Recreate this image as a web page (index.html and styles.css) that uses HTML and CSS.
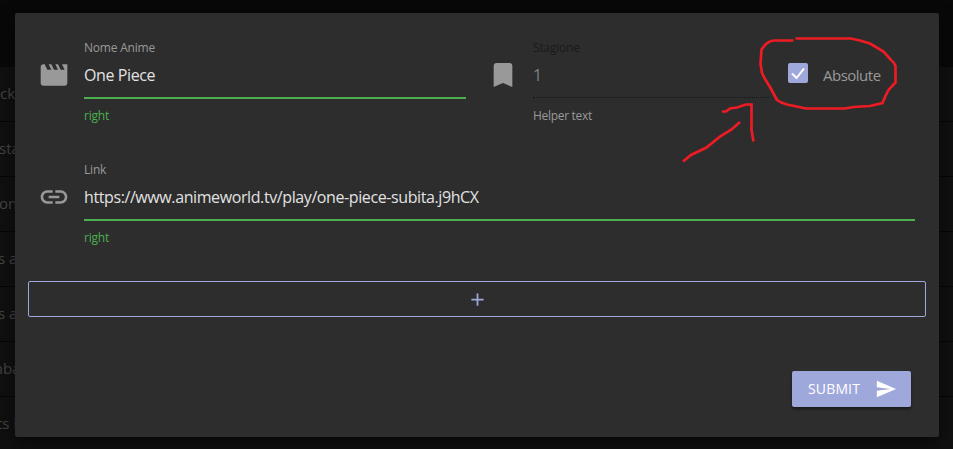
FILE: index.html
```html
<!DOCTYPE html>
<html lang="it">
<head>
<meta charset="utf-8">
<title>Aggiungi anime</title>
<link rel="stylesheet" href="styles.css">
</head>
<body>
<div class="page">
  <div class="page-header"></div>
  <div class="row"><span class="t1">ck</span></div>
  <div class="row"><span class="t2">sta</span></div>
  <div class="row"><span class="t3">on</span></div>
  <div class="row"><span class="t4">s a</span></div>
  <div class="row"><span class="t4">s a</span></div>
  <div class="row"><span class="t5">mba</span></div>
  <div class="row"><span class="t6">ts l</span></div>
</div>
<form class="modal">
  <div class="fields">
    <div class="field">
      <svg class="icon" viewBox="0 0 24 24"><path d="M18 4l2 4h-3l-2-4h-2l2 4h-3l-2-4H8l2 4H7L5 4H4c-1.1 0-1.99.9-1.99 2L2 18c0 1.1.9 2 2 2h16c1.1 0 2-.9 2-2V4h-4z"/></svg>
      <div class="control">
        <div class="label">Nome Anime</div>
        <div class="value"><span class="name-value">One Piece</span></div>
        <div class="helper">right</div>
      </div>
    </div>
    <div class="field disabled">
      <svg class="icon" viewBox="0 0 24 24"><path d="M17 3H7c-1.1 0-1.99.9-1.99 2L5 21l7-3 7 3V5c0-1.100-.9-2-2-2z"/></svg>
      <div class="control">
        <div class="label">Stagione</div>
        <div class="value">1</div>
        <div class="helper">Helper text</div>
      </div>
    </div>
    <div class="check">
      <span class="box"><svg viewBox="0 0 20 20"><path d="M4 10.500L8.500 15L16 5.500"/></svg></span>
      <span class="check-label">Absolute</span>
    </div>
  </div>
  <div class="field link-field">
    <svg class="icon" viewBox="0 0 24 24"><path d="M3.900 12c0-1.710 1.390-3.100 3.100-3.100h4V7H7c-2.760 0-5 2.240-5 5s2.240 5 5 5h4v-1.900H7c-1.710 0-3.100-1.390-3.100-3.100zM8 13h8v-2H8v2zm9-6h-4v1.900h4c1.710 0 3.100 1.390 3.100 3.100s-1.390 3.100-3.100 3.100h-4V17h4c2.760 0 5-2.240 5-5s-2.240-5-5-5z"/></svg>
    <div class="control">
      <div class="label">Link</div>
      <div class="value"><span class="url">https://www.animeworld.tv/play/one-piece-subita.j9hCX</span></div>
      <div class="helper">right</div>
    </div>
  </div>
  <button type="button" class="add" aria-label="+"><svg viewBox="0 0 24 24"><path d="M19 13h-6v6h-2v-6H5v-2h6V5h2v6h6v2z"/></svg></button>
  <div class="actions">
    <button type="button" class="submit"><span>SUBMIT</span><svg viewBox="0 0 24 24"><path d="M2.010 21L23 12 2.010 3 2 10l15 2-15 2z"/></svg></button>
  </div>
</form>
<svg class="annotation" viewBox="0 0 953 449">
  <path d="M793.500 40.500H774Q769 41 766 44L761.500 49.500L760.500 64L762 73L765 79L770 87L777 100Q781 103 787 104.500L806 108.500H845L853 107L870 106L882.500 103L885 97L888.500 90L895.500 82.500V66Q894 62 891 60L883.500 51.500L870 43.500L860 40.500L851 38.500H795.500"/>
  <path d="M683 161.500L691 155L706.500 147.500L720 136.500L731.500 129.500L740 122M722 111.500H726L730 108.500L737 107.500L746 104.500H751.500V130L753.500 141.500"/>
</svg>
</body>
</html>
```
FILE: styles.css
```css
* { box-sizing: border-box; }
body {
  margin: 0;
  height: 449px;
  overflow: hidden;
  background: #080808;
  font: 16px/24px "Open Sans", "Noto Sans", sans-serif;
}
span { display: inline-block; white-space: nowrap; }
.page-header { height: 67px; background: #080808; }
.row {
  height: 55px;
  padding-top: 14px;
  background: #101010;
  border-bottom: 1px solid #060606;
  color: #454545;
  font-size: 15px;
}
.row span { width: 45px; }
.t2, .t3 { margin-left: -1px; }
.t4 { margin-left: -2px; }
.t5 { margin-left: -11px; }
.t6 { margin-left: -3px; }
.modal {
  position: absolute;
  inset: 13px 14px 12px 15px;
  display: flex;
  flex-direction: column;
  padding: 27px 13px 30px;
  border-radius: 2px;
  background: #2d2d2d;
  box-shadow: 0 8px 18px rgba(0, 0, 0, .5);
}
.fields {
  display: grid;
  grid-template-columns: 449px 282px 1fr;
  padding-left: 10px;
  height: 122px;
}
.field { display: flex; gap: 14px; align-items: flex-start; }
.icon { flex: none; width: 32px; height: 32px; margin-top: 19px; fill: #999; }
.control { flex: 1; }
.fields .field:first-child { padding-right: 21px; }
.label { height: 16px; font-size: 12px; line-height: 16px; letter-spacing: -.2px; color: #999; }
.value {
  height: 43px;
  padding-top: 7px;
  border-bottom: 2px solid #4caf50;
  color: #e2e2e2;
}
.helper { padding-top: 9px; font-size: 12px; line-height: 16px; letter-spacing: -.2px; color: #4caf50; }
.disabled .label { color: #1a1a1a; }
.disabled .value { height: 42px; border-bottom: 1px dotted #151515; color: #818181; }
.disabled .helper { padding-top: 10px; letter-spacing: -.3px; color: #999; }
.check { display: flex; align-items: flex-start; gap: 15px; padding: 23px 0 0 19px; }
.box { width: 20px; height: 20px; border-radius: 2px; background: #9fa8da; }
.box svg { display: block; width: 20px; height: 20px; fill: none; stroke: #fff; stroke-width: 2; }
.check-label { color: #999; font-size: 15px; letter-spacing: -.5px; }
.link-field { padding: 0 11px 0 10px; height: 119px; }
.name-value, .url { letter-spacing: -.4px; }
.add {
  height: 36px;
  flex: none;
  padding: 0;
  border: 1px solid #9fa8da;
  border-radius: 2px;
  background: transparent;
  display: flex;
  align-items: center;
  justify-content: center;
}
.add svg { width: 21px; height: 21px; fill: #9fa8da; }
.actions { display: flex; justify-content: flex-end; padding: 54px 15px 0 0; }
.submit {
  display: flex;
  align-items: center;
  justify-content: space-between;
  width: 119px;
  height: 36px;
  padding: 0 14px 0 16px;
  border: 0;
  border-radius: 2px;
  background: #9fa8da;
  color: #fff;
  font: 14px/20px "Open Sans", sans-serif;
  letter-spacing: .15px;
  box-shadow: 0 2px 3px rgba(0, 0, 0, .45);
}
.submit svg { width: 22px; height: 22px; fill: #fff; }
.annotation {
  position: absolute;
  inset: 0;
  width: 953px;
  height: 449px;
  fill: none;
  stroke: #ed1c24;
  stroke-width: 2.7;
  pointer-events: none;
}
```
